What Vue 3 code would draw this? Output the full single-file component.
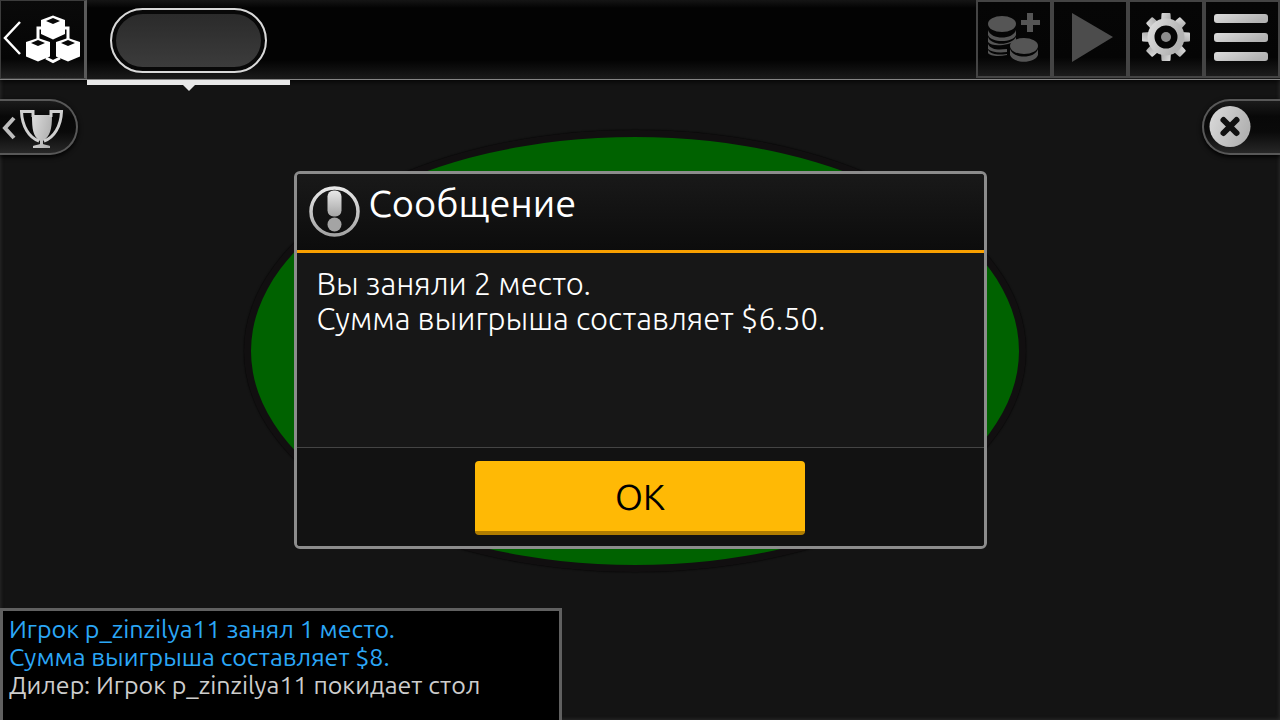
<script setup>
import { ref } from 'vue'

const open = ref(true)
const message = ['Вы заняли 2 место.', 'Сумма выигрыша составляет $6.50.']
const chat = [
  { text: 'Игрок p_zinzilya11 занял 1 место.', kind: 'info' },
  { text: 'Сумма выигрыша составляет $8.', kind: 'info' },
  { text: 'Дилер: Игрок p_zinzilya11 покидает стол', kind: 'dealer' }
]
const teeth = [0, 45, 90, 135, 180, 225, 270, 315]
</script>

<template>
  <div class="page">
    <svg class="defs" width="0" height="0" aria-hidden="true">
      <defs>
        <linearGradient id="silver" x1="0" y1="0" x2="1" y2="0.4">
          <stop offset="0" stop-color="#dcdcdc" />
          <stop offset="1" stop-color="#b2b2b2" />
        </linearGradient>
        <linearGradient id="silver-down" x1="0" y1="0" x2="0" y2="1">
          <stop offset="0" stop-color="#e8e8e8" />
          <stop offset="1" stop-color="#a4a4a4" />
        </linearGradient>
      </defs>
    </svg>

    <div class="felt-layer"><div class="felt"></div></div>

    <header class="bar">
      <button class="lobby" type="button" aria-label="Лобби">
        <svg width="83" height="77" viewBox="1 1 83 77">
          <path d="M20 22 L5 38 L20 54" fill="none" stroke="#fff" stroke-width="2.500" />
          <path d="M42 28 H38 V41 M64 28 H68 V41 M46 58 L53 61.500 L60 58" fill="none" stroke="#fff" stroke-width="3" />
          <g fill="#fff">
            <path d="M53 15.500 L65 20 V34 L53 39.500 L41 34 V20 Z" />
            <path d="M38 38 L50 42 V56.500 L38 61.500 L26 56.500 V42 Z" />
            <path d="M68 38 L80 42 V56.500 L68 61.500 L56 56.500 V42 Z" />
          </g>
          <g fill="#080808">
            <path d="M53 18 L60 21 L53 24 L46 21 Z" />
            <path d="M38 40 L45 43 L38 46 L31 43 Z" />
            <path d="M68 40 L75 43 L68 46 L61 43 Z" />
          </g>
        </svg>
      </button>

      <button class="tab" type="button" aria-label="Стол 1"><span class="pill"></span></button>

      <nav class="tools">
        <button class="tool" type="button" aria-label="Докупить фишки" disabled>
          <svg width="72" height="74" viewBox="0 0 72 74" fill="#555">
            <path d="M10 28 C13 38 35 38 38 28 V33 C35 41 13 41 10 33 Z M10 35 C13 44 33 44 38 35 V38 C36 40 33 41 30 42 C22 44 13 44 10 40 Z M10 42 C13 48 20 48 29 47 V50 C20 51 13 50 10 47 Z M10 48 C14 53 20 53 29 52 V53 C20 55 12 54 10 51 Z" />
            <ellipse cx="24" cy="22" rx="14" ry="8" />
            <ellipse cx="46" cy="44" rx="14" ry="8" />
            <path d="M32 47 C35 57 57 57 60 47 V53 C57 62 35 62 32 53 Z" />
            <path d="M49 11 H55 V18 H62 V23 H55 V30 H49 V23 H43 V18 H49 Z" />
          </svg>
        </button>
        <button class="tool" type="button" aria-label="Играть" disabled>
          <svg width="72" height="74" viewBox="0 0 72 74"><path d="M18 11 L59 35 L18 60 Z" fill="#4c4c4c" /></svg>
        </button>
        <button class="tool" type="button" aria-label="Настройки">
          <svg width="72" height="74" viewBox="0 0 72 74">
            <g fill="url(#silver)">
              <path v-for="a in teeth" :key="a" d="M31.500 12 Q31.500 11 32.500 11 H39.500 Q40.500 11 40.500 12 L41 20 H31 Z" :transform="`rotate(${a} 36 35)`" />
            </g>
            <circle cx="36" cy="35" r="15" fill="none" stroke="url(#silver)" stroke-width="7" />
            <circle cx="36" cy="35" r="5" fill="#8d8d8d" />
          </svg>
        </button>
        <button class="tool" type="button" aria-label="Меню">
          <svg width="72" height="74" viewBox="0 0 72 74" fill="url(#silver)">
            <rect x="8" y="12" width="54" height="9" rx="3" />
            <rect x="8" y="31" width="54" height="9" rx="3" />
            <rect x="8" y="50" width="54" height="9" rx="3" />
          </svg>
        </button>
      </nav>
    </header>

    <main class="stage">
      <button class="side left" type="button" aria-label="Турнир">
        <svg width="76" height="52" viewBox="0 1 76 52">
          <path d="M14 18 L5 28 L14 38" fill="none" stroke="#bdbdbd" stroke-width="4" />
          <path d="M32 15 H52 C52 30 50 36 43 41 V44 C44 45 49 45 50 46 V48 H33 V46 C34 45 39 45 40 44 V41 C33 36 32 30 32 15 Z" fill="url(#silver)" />
          <path d="M33 17 V11.500 H21.500 C22 26 29 38 39 41 M51 17 V11.500 H61.500 C61 26 54 38 44 41" fill="none" stroke="#d0d0d0" stroke-width="3" />
        </svg>
      </button>
      <button class="side right" type="button" aria-label="Закрыть стол">
        <svg width="76" height="52" viewBox="1 1 76 52">
          <circle cx="27" cy="26.500" r="20.500" fill="url(#silver)" />
          <path d="M20.500 20 L33.500 33 M33.500 20 L20.500 33" stroke="#111" stroke-width="6" stroke-linecap="round" />
        </svg>
      </button>
    </main>

    <section class="chat" aria-label="Чат">
      <p v-for="line in chat" :key="line.text" :class="line.kind">{{ line.text }}</p>
    </section>

    <div v-if="open" class="overlay">
      <section class="dialog" role="dialog" aria-labelledby="dialog-title">
        <div class="head">
          <svg width="52" height="52" viewBox="0 0 52 52" aria-hidden="true">
            <circle cx="26.500" cy="26.500" r="23.500" fill="none" stroke="url(#silver-down)" stroke-width="3.500" />
            <rect x="19.500" y="5.500" width="14" height="26" rx="6" fill="url(#silver-down)" />
            <circle cx="26.500" cy="39.500" r="7" fill="#a4a4a4" />
          </svg>
          <h1 id="dialog-title">Сообщение</h1>
        </div>
        <div class="body"><p v-for="line in message" :key="line">{{ line }}</p></div>
        <div class="foot"><button class="ok" type="button" @click="open = false">ОК</button></div>
      </section>
    </div>
  </div>
</template>

<style>
body { margin: 0; background: #141414; }
</style>

<style scoped>
* { box-sizing: border-box; }
button { padding: 0; border: 0; background: none; font: inherit; color: inherit; cursor: pointer; }
button:disabled { cursor: default; }
svg { display: block; }
p, h1 { margin: 0; font-weight: 400; }
.defs { position: absolute; }
.page {
  position: relative;
  display: flex;
  flex-direction: column;
  min-height: 100vh;
  overflow: hidden;
  background: #141414;
  box-shadow: inset 0 0 4px #333;
  font-family: "Ubuntu", "Noto Sans", "Open Sans", sans-serif;
}
.felt-layer {
  position: absolute;
  inset: 0;
  display: flex;
  align-items: center;
  justify-content: center;
  padding: 0 10px 18px 0;
}
.felt {
  width: 782px;
  height: 442px;
  border: 7px solid #110f10;
  border-radius: 50%;
  background: #006200;
  box-shadow: 0 0 2px #000;
}
.bar {
  position: relative;
  display: flex;
  height: 80px;
  border-bottom: 1px solid #858585;
  background: linear-gradient(#151515, #030303 8px, #030303 60px, #1a1a1a);
  box-shadow: 0 1px 6px #000;
}
.lobby {
  width: 87px;
  height: 79px;
  border: 1px solid #3c3c3c;
  border-right: 3px solid #5a5a5a;
  background: linear-gradient(#0a0a0a, #050505 75%, #202020);
}
.tab {
  position: relative;
  display: flex;
  justify-content: center;
  align-items: center;
  width: 203px;
  height: 80px;
}
.tab::before {
  content: "";
  position: absolute;
  top: 80px;
  left: 0;
  width: 100%;
  height: 5px;
  background: #e8e8e8;
}
.tab::after {
  content: "";
  position: absolute;
  top: 85px;
  left: 50%;
  margin-left: -6px;
  border: 6px solid transparent;
  border-top-color: #e8e8e8;
  border-bottom: 0;
}
.pill {
  width: 157px;
  height: 65px;
  border: 2px solid #d8d8d8;
  border-radius: 33px;
  background: linear-gradient(#292929, #3d3d3d);
  box-shadow: inset 0 0 0 4px #080808;
}
.tools { display: flex; margin-left: auto; }
.tool {
  width: 76px;
  height: 78px;
  border: 2px solid #444;
  background: linear-gradient(#060606, #050505 75%, #1c1c1c);
}
.stage {
  position: relative;
  display: flex;
  flex: 1;
  justify-content: space-between;
  align-items: flex-start;
  padding-top: 19px;
}
.side {
  width: 78px;
  height: 56px;
  border: 2px solid #585858;
  background: linear-gradient(#1b1b1b, #080808 30%, #0a0a0a 60%, #272727);
  box-shadow: 0 2px 5px #000;
}
.left { border-left: 0; border-radius: 0 28px 28px 0; }
.right { border-right: 0; border-radius: 28px 0 0 28px; }
.chat {
  position: relative;
  width: 562px;
  max-width: 100%;
  height: 112px;
  padding: 4px 6px;
  border: 3px solid #606060;
  border-bottom: 0;
  background: #000;
  font-size: 25px;
  line-height: 28px;
  white-space: nowrap;
}
.info { color: #2ba7f7; }
.dealer { color: #cdcdcd; }
.overlay {
  position: absolute;
  inset: 0;
  display: flex;
  align-items: center;
  justify-content: center;
}
.dialog {
  width: 693px;
  max-width: 100%;
  border: 3px solid #8c8c8c;
  border-radius: 6px;
  background: #171717;
  color: #fff;
}
.head {
  display: flex;
  gap: 9px;
  height: 79px;
  padding: 11px;
  border-bottom: 3px solid #f9a000;
  border-radius: 3px 3px 0 0;
  background: linear-gradient(#191919, #0c0c0c);
}
h1 { font-size: 38px; line-height: 36px; }
.body {
  min-height: 194px;
  padding: 13px 20px;
  font-size: 31px;
  line-height: 35px;
}
.body p { font-weight: 300; }
.foot {
  display: flex;
  justify-content: center;
  padding: 13px 0 11px;
  border-top: 1px solid #444;
  border-radius: 0 0 3px 3px;
  background: #121212;
}
.ok {
  width: 330px;
  height: 74px;
  border-bottom: 4px solid #b07d00;
  border-radius: 4px;
  background: #ffb905;
  color: #000;
  font-size: 36px;
}
</style>
